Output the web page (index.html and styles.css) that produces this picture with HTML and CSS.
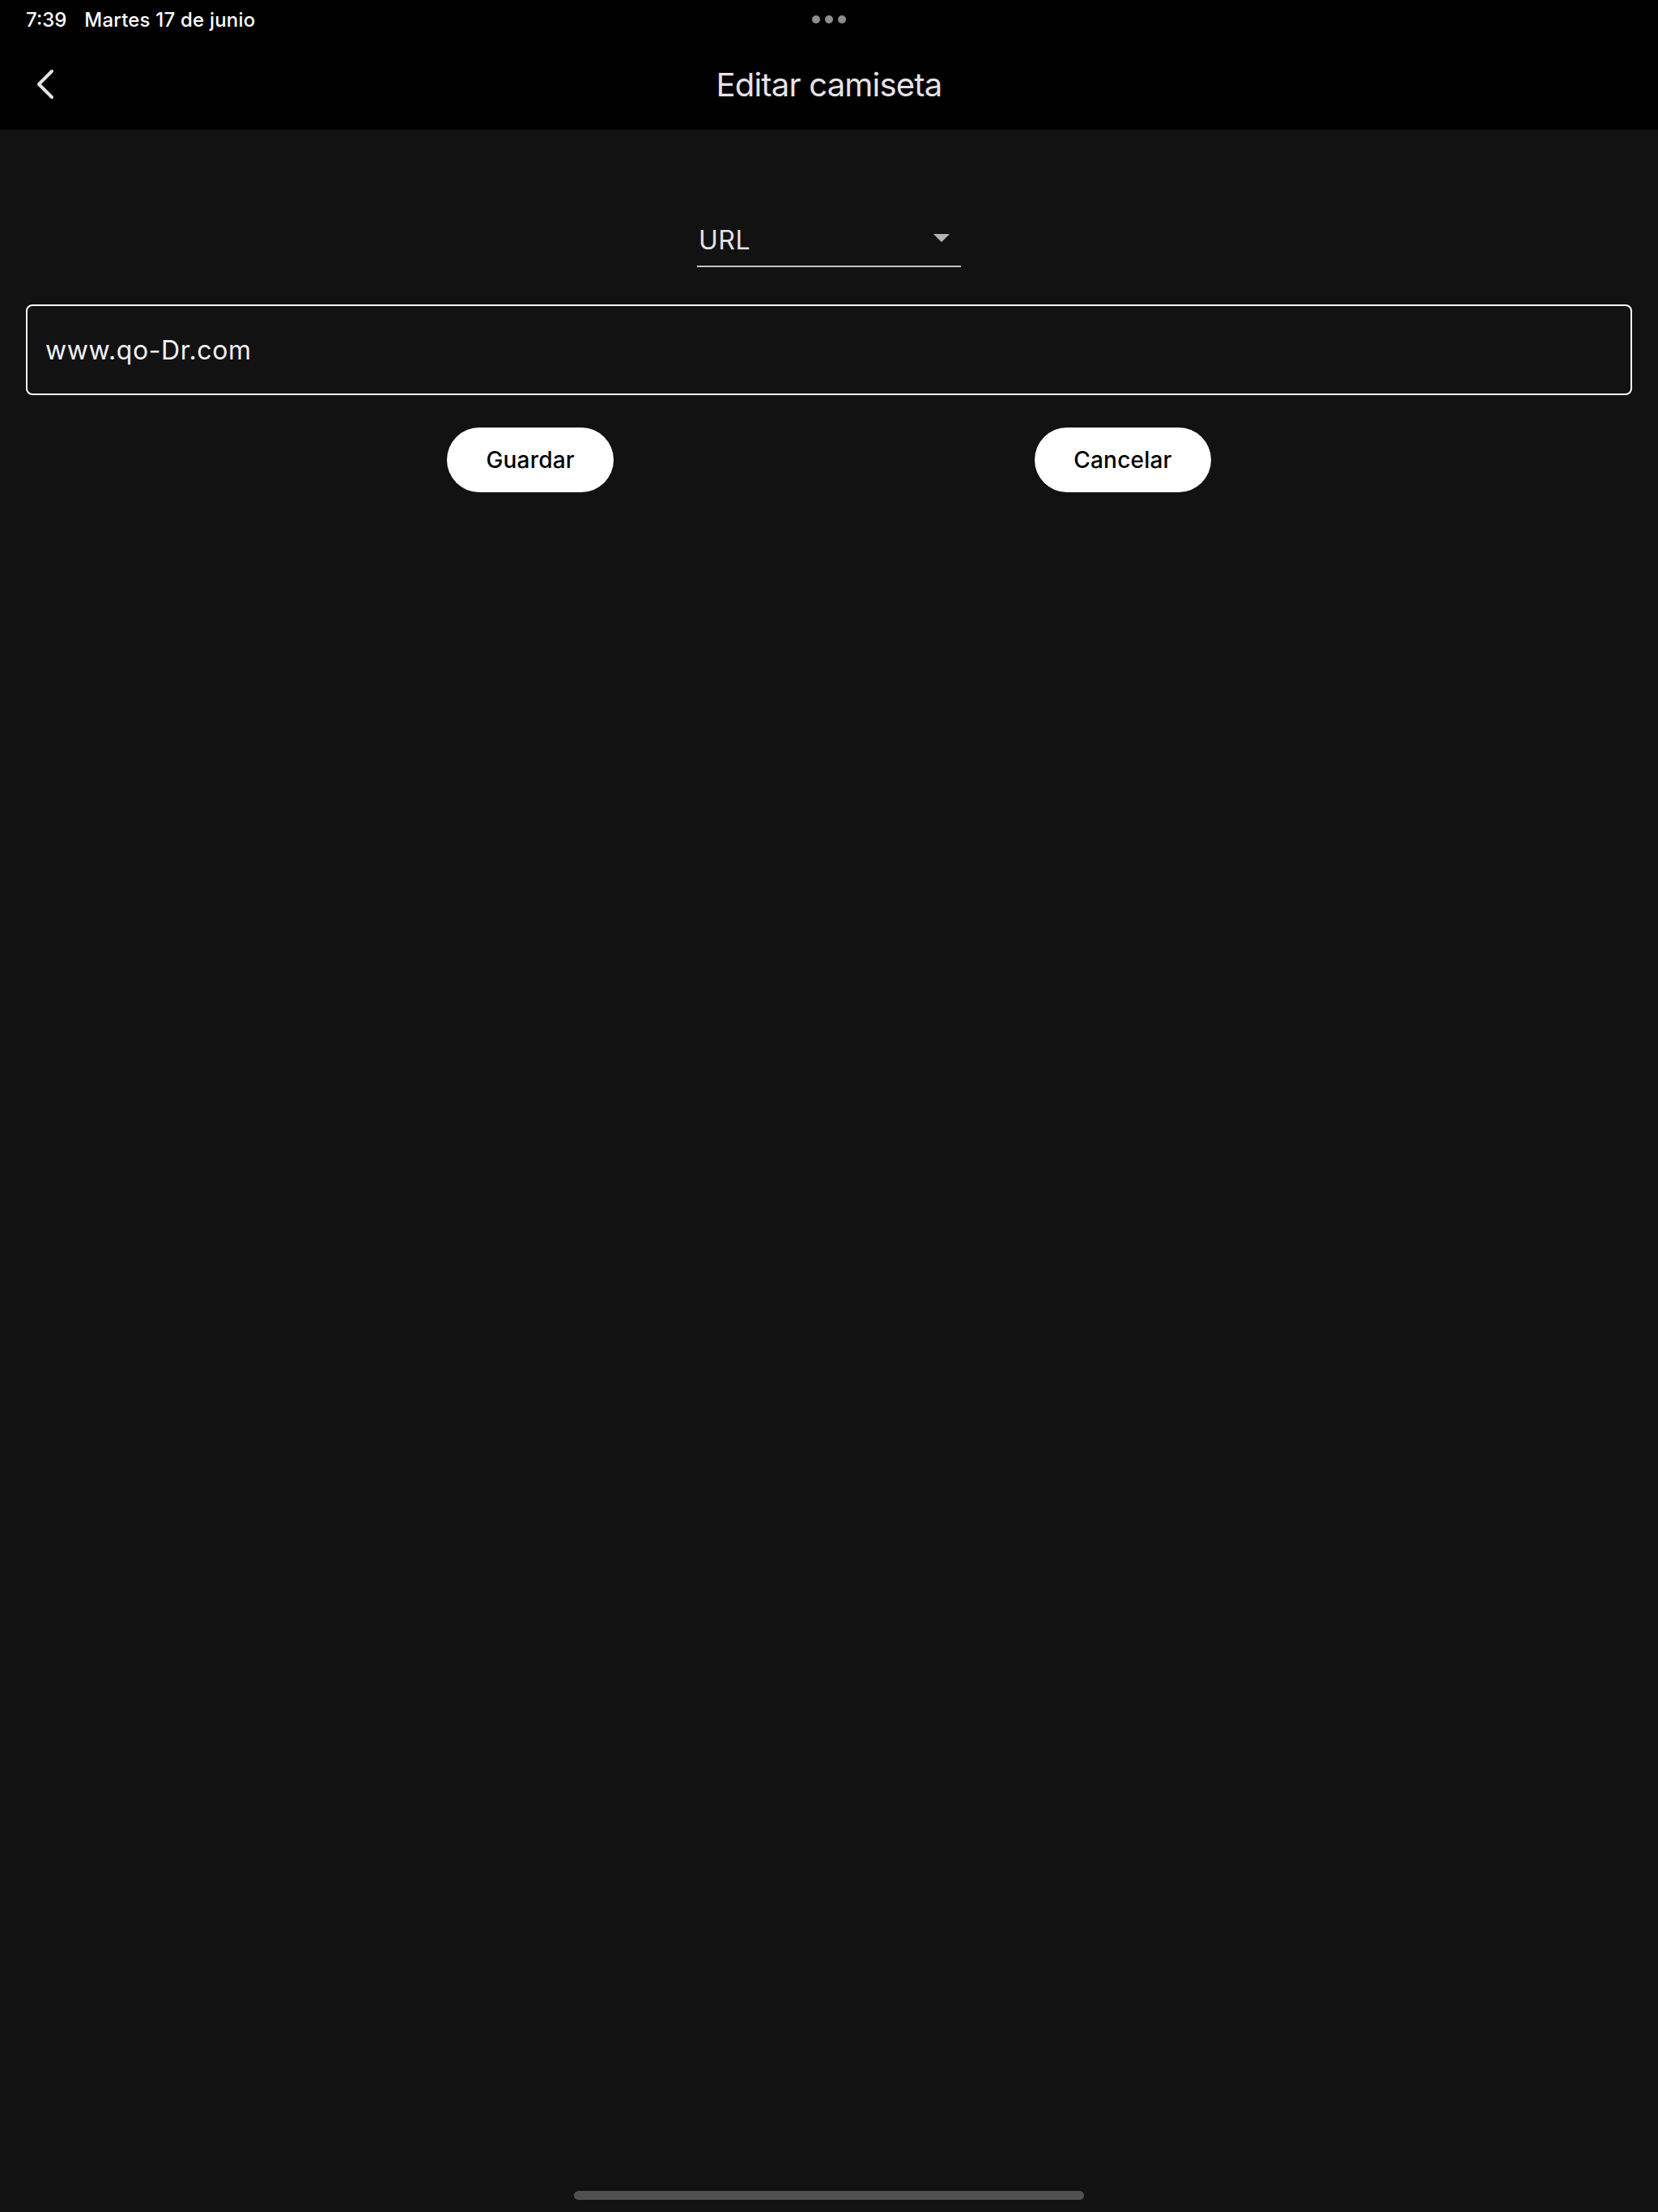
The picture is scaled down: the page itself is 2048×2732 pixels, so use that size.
FILE: index.html
```html
<!DOCTYPE html>
<html lang="es">
<head>
<meta charset="utf-8">
<title>Editar camiseta</title>
<link rel="stylesheet" href="styles.css">
</head>
<body>
<div class="screen">
  <header class="header">
    <div class="statusbar">
      <span class="time">7:39</span>
      <span class="date">Martes 17 de junio</span>
      <div class="dots"><i></i><i></i><i></i></div>
    </div>
    <div class="appbar">
      <button class="back" aria-label="Atrás">
        <svg width="24" height="40" viewBox="0 0 24 40"><path d="M20 4 L4 20 L20 36" fill="none" stroke="#e6e1e9" stroke-width="4" stroke-linecap="round" stroke-linejoin="round"/></svg>
      </button>
      <h1 class="title">Editar camiseta</h1>
    </div>
  </header>
  <main class="content">
    <div class="dropdown">
      <span class="dd-value">URL</span>
      <svg class="dd-arrow" width="20" height="10" viewBox="0 0 20 10"><path d="M0 0 H20 L10 10 Z" fill="#b4b4b4"/></svg>
    </div>
    <div class="field">
      <span class="field-text">www.qo-Dr.com</span>
    </div>
    <div class="actions">
      <button class="pill">Guardar</button>
      <button class="pill">Cancelar</button>
    </div>
  </main>
  <div class="home-indicator"></div>
</div>
</body>
</html>
```
FILE: styles.css
```css
* { box-sizing: border-box; }
html, body { margin: 0; padding: 0; }
body {
  background: #121212;
  font-family: "Inter", "Roboto", "Liberation Sans", sans-serif;
  color: #e6e1e5;
}
.screen {
  width: 2048px;
  height: 2732px;
  display: flex;
  flex-direction: column;
  background: #121212;
}
.header { background: #000; }
.statusbar {
  height: 48px;
  display: flex;
  align-items: center;
  padding-left: 32px;
  position: relative;
  font-size: 24px;
  font-weight: 500;
  color: #fff;
}
.statusbar .date { margin-left: 22px; letter-spacing: 0.2px; }
.dots {
  position: absolute;
  left: 1003px;
  top: 19px;
  display: flex;
  gap: 6px;
}
.dots i {
  display: block;
  width: 10px;
  height: 10px;
  border-radius: 50%;
  background: #8e8e8e;
}
.appbar {
  height: 112px;
  display: flex;
  align-items: center;
  justify-content: center;
  position: relative;
}
.back {
  position: absolute;
  left: 44px;
  top: 36px;
  width: 24px;
  height: 40px;
  padding: 0;
  border: 0;
  background: none;
  display: block;
}
.back svg { display: block; }
.title {
  margin: 0;
  font-family: "Inter", "Roboto", "Liberation Sans", sans-serif;
  font-size: 40px;
  font-weight: 400;
  color: #e6e1e9;
  letter-spacing: -0.8px;
}
.content {
  padding: 0 32px;
  display: flex;
  flex-direction: column;
}
.dropdown {
  align-self: center;
  width: 326px;
  margin-top: 113px;
  display: flex;
  align-items: center;
  justify-content: space-between;
  padding: 0 14px 7px 2px;
  border-bottom: 2px solid #c4c4c4;
}
.dd-value {
  font-size: 32px;
  line-height: 48px;
  color: #e6e1e9;
  letter-spacing: 0.5px;
}
.dd-arrow { display: block; margin-top: -6px; }
.field {
  margin-top: 46px;
  height: 112px;
  border: 2px solid #fff;
  border-radius: 8px;
  display: flex;
  align-items: center;
  padding-left: 22px;
}
.field-text {
  font-size: 32px;
  color: #f2f0f4;
  letter-spacing: 0.6px;
}
.actions {
  margin-top: 40px;
  display: flex;
  justify-content: space-evenly;
}
.pill {
  height: 80px;
  padding: 0 48px;
  border: 0;
  border-radius: 40px;
  background: #fff;
  color: #000;
  font-family: "Inter", "Roboto", "Liberation Sans", sans-serif;
  font-size: 28px;
  font-weight: 500;
  letter-spacing: 0.2px;
}
.home-indicator {
  margin: auto auto 15px;
  width: 630px;
  height: 11px;
  border-radius: 6px;
  background: #505050;
}
```
